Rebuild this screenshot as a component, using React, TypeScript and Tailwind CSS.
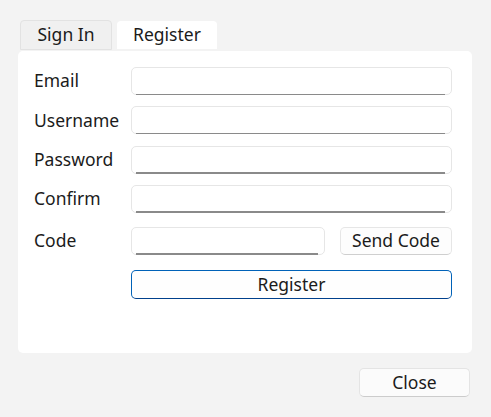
import { useState } from 'react'

const font = { fontFamily: '"Noto Sans", "Open Sans", sans-serif' }

function Field({ className = '' }: { className?: string }) {
  return (
    <div className={`relative h-[28px] rounded-[5px] border border-[#e6e6e6] bg-white ${className}`}>
      <input className="h-full w-full bg-transparent px-2 text-[17.5px] outline-none" />
      <div className="absolute bottom-[-1px] left-[4px] right-[6px] h-[1.5px] bg-[#8a8a8a]" />
    </div>
  )
}

export default function App() {
  const [tab, setTab] = useState<'signin' | 'register'>('register')
  const rows = ['Email', 'Username', 'Password', 'Confirm']

  return (
    <div className="flex h-[417px] w-[491px] flex-col bg-[#f3f3f3] text-[17.5px] leading-none text-[#1b1b1b]" style={font}>
      <div className="flex items-end gap-[5px] pl-[20px] pt-[20px]">
        <button
          onClick={() => setTab('signin')}
          className={`h-[30px] w-[92px] rounded-t-[4px] border border-[#e2e2e2] ${tab === 'signin' ? 'bg-white' : 'bg-[#f0f0f0]'}`}
        >
          Sign In
        </button>
        <button
          onClick={() => setTab('register')}
          className={`mb-[1px] h-[28px] w-[100px] rounded-t-[4px] ${tab === 'register' ? 'bg-white' : 'bg-[#f0f0f0]'}`}
        >
          Register
        </button>
      </div>

      <div className="mx-[18px] mt-[1px] h-[302px] w-[454px] rounded-[5px] bg-white pl-[16px] pr-[20px] pt-[16px]">
        <div className="flex flex-col gap-[11.3px]">
          {rows.map((label) => (
            <div key={label} className="flex items-center">
              <span className="w-[97px] shrink-0">{label}</span>
              <Field className="flex-1" />
            </div>
          ))}
        </div>

        <div className="mt-[14px] flex items-center">
          <span className="w-[97px] shrink-0">Code</span>
          <Field className="w-[194px]" />
          <button className="ml-[15px] h-[28px] flex-1 rounded-[5px] border border-[#e6e6e6] border-b-[#cfcfcf] bg-[#fdfdfd]">
            Send Code
          </button>
        </div>

        <div className="mt-[15px] pl-[97px]">
          <button className="h-[29px] w-full rounded-[5px] border-[1.5px] border-[#0062b8] border-b-[#00408c] bg-[#fefefe]">
            Register
          </button>
        </div>
      </div>

      <div className="flex justify-end pr-[21px] pt-[15px]">
        <button className="h-[29px] w-[111px] rounded-[5px] border border-[#e4e4e4] border-b-[#cccccc] bg-[#fbfbfb]">
          Close
        </button>
      </div>
    </div>
  )
}
